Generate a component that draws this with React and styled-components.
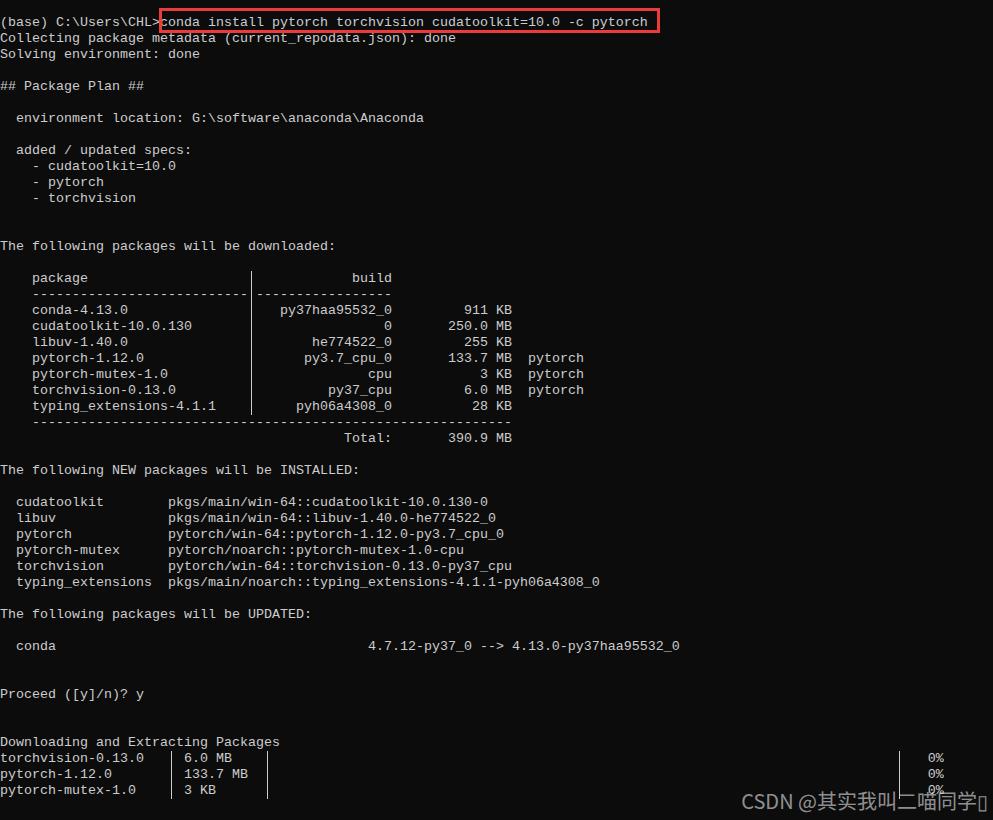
import React from 'react';
import styled, { createGlobalStyle } from 'styled-components';

const GlobalStyle = createGlobalStyle`
  html, body {
    margin: 0;
    padding: 0;
    background: #0c0c0c;
  }
`;

const Console = styled.div`
  position: relative;
  min-height: 100vh;
  overflow: hidden;
  box-sizing: border-box;
  padding-top: 15px;
  background: #0c0c0c;
  color: #cccccc;
  font-family: "Liberation Mono", monospace;
  font-size: 13.333px;
`;

const Line = styled.div`
  height: 16px;
  line-height: 16px;
  white-space: pre;
`;

const Bar = styled.span`
  display: inline-block;
  width: 8px;
  height: 16px;
  vertical-align: top;
  background: linear-gradient(#cccccc, #cccccc) no-repeat 3px 0 / 1px 100%;
`;

const Highlight = styled.span`
  position: relative;
  display: inline-block;
  height: 16px;
  &::after {
    content: '';
    position: absolute;
    left: -1px;
    top: -7px;
    right: -12px;
    bottom: -2px;
    border: 3px solid #ec3b3b;
  }
`;

const Watermark = styled.div`
  position: absolute;
  right: 5px;
  bottom: 7px;
  font-family: "Noto Sans CJK SC", "Noto Sans", sans-serif;
  font-size: 20px;
  line-height: 24px;
  color: rgba(230, 230, 230, 0.62);
  white-space: nowrap;
`;

const pkgRows = [
  ['conda-4.13.0', 'py37haa95532_0', '911 KB', ''],
  ['cudatoolkit-10.0.130', '0', '250.0 MB', ''],
  ['libuv-1.40.0', 'he774522_0', '255 KB', ''],
  ['pytorch-1.12.0', 'py3.7_cpu_0', '133.7 MB', 'pytorch'],
  ['pytorch-mutex-1.0', 'cpu', '3 KB', 'pytorch'],
  ['torchvision-0.13.0', 'py37_cpu', '6.0 MB', 'pytorch'],
  ['typing_extensions-4.1.1', 'pyh06a4308_0', '28 KB', ''],
];

const newPkgs = [
  ['cudatoolkit', 'pkgs/main/win-64::cudatoolkit-10.0.130-0'],
  ['libuv', 'pkgs/main/win-64::libuv-1.40.0-he774522_0'],
  ['pytorch', 'pytorch/win-64::pytorch-1.12.0-py3.7_cpu_0'],
  ['pytorch-mutex', 'pytorch/noarch::pytorch-mutex-1.0-cpu'],
  ['torchvision', 'pytorch/win-64::torchvision-0.13.0-py37_cpu'],
  ['typing_extensions', 'pkgs/main/noarch::typing_extensions-4.1.1-pyh06a4308_0'],
];

const downloads = [
  ['torchvision-0.13.0', '6.0 MB'],
  ['pytorch-1.12.0', '133.7 MB'],
  ['pytorch-mutex-1.0', '3 KB'],
];

const lines = [
  'Collecting package metadata (current_repodata.json): done',
  'Solving environment: done',
  '',
  '## Package Plan ##',
  '',
  '  environment location: G:\\software\\anaconda\\Anaconda',
  '',
  '  added / updated specs:',
  '    - cudatoolkit=10.0',
  '    - pytorch',
  '    - torchvision',
  '',
  '',
  'The following packages will be downloaded:',
  '',
  '    ' + 'package'.padEnd(27) + '|' + 'build'.padStart(17),
  '    ' + '-'.repeat(27) + '|' + '-'.repeat(17),
  ...pkgRows.map(([n, b, s, c]) =>
    '    ' + n.padEnd(27) + '|' + b.padStart(17) + s.padStart(15) + (c ? '  ' + c : '')
  ),
  '    ' + '-'.repeat(60),
  'Total:'.padStart(49) + '390.9 MB'.padStart(15),
  '',
  'The following NEW packages will be INSTALLED:',
  '',
  ...newPkgs.map(([n, s]) => '  ' + n.padEnd(19) + s),
  '',
  'The following packages will be UPDATED:',
  '',
  '  conda'.padEnd(46) + '4.7.12-py37_0 --> 4.13.0-py37haa95532_0',
  '',
  '',
  'Proceed ([y]/n)? y',
  '',
  '',
  'Downloading and Extracting Packages',
  ...downloads.map(([n, s]) =>
    n.padEnd(21) + '| ' + s.padEnd(10) + '|' + ' '.repeat(78) + '|' + '   0%'
  ),
];

const renderText = (text) =>
  text.split('|').flatMap((part, i) => (i === 0 ? [part] : [<Bar key={i} />, part]));

const App = () => (
  <>
    <GlobalStyle />
    <Console>
      <Line>
        (base) C:\Users\CHL&gt;
        <Highlight>conda install pytorch torchvision cudatoolkit=10.0 -c pytorch</Highlight>
      </Line>
      {lines.map((text, i) => (
        <Line key={i}>{renderText(text)}</Line>
      ))}
      <Watermark>CSDN @其实我叫二喵同学▯</Watermark>
    </Console>
  </>
);

export default App;
